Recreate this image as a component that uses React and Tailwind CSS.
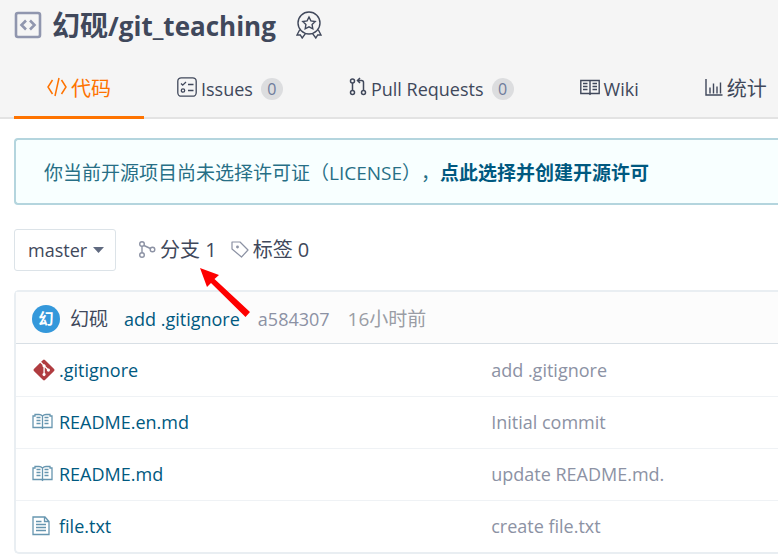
import React, { useState } from "react";
import { FaGitAlt } from "react-icons/fa";

const RepoIcon = () => (
  <svg className="size-7 shrink-0 text-[#9096ae]" viewBox="0 0 28 28" fill="none" stroke="currentColor">
    <rect x="2" y="2" width="24" height="24" rx="2" strokeWidth="2.6" />
    <path d="M12 9.500 7.500 14l4.500 4.500M16 9.500l4.500 4.500-4.500 4.500" strokeWidth="2.600" />
  </svg>
);

const BadgeIcon = () => (
  <svg className="h-7 w-[26px] shrink-0" viewBox="0 0 26 28" fill="none" stroke="currentColor" strokeWidth="1.400">
    <circle cx="13" cy="12" r="11" />
    <path d="m13 6 1.900 3.900 4.300.6-3.100 3 .7 4.300-3.800-2-3.800 2 .7-4.300-3.100-3 4.300-.6z" />
    <path d="M3.600 19 1 24l3.300-.1L6.200 27l3.600-4.900M22.400 19l2.600 5-3.300-.1L19.800 27l-3.600-4.900" />
  </svg>
);

const CodeIcon = () => (
  <svg className="h-5 w-5" viewBox="0 0 20 20" fill="none" stroke="currentColor" strokeWidth="1.500">
    <path d="M5.500 3 1 10l4.500 7M14.500 3 19 10l-4.500 7M12 1 8 19" />
  </svg>
);

const IssuesIcon = () => (
  <svg className="h-5 w-5" viewBox="0 0 20 20" fill="none" stroke="currentColor" strokeWidth="1.300">
    <rect x="0.800" y="0.800" width="18.400" height="18.400" rx="3.500" />
    <path d="m4 6.500 1.700 1.700L9 5M11 7.500h5.500M11 13.500h5.500" />
    <circle cx="6" cy="13.500" r="1.700" />
  </svg>
);

const PullIcon = () => (
  <svg className="h-5 w-[18px]" viewBox="0 0 18 20" fill="none" stroke="currentColor" strokeWidth="1.500">
    <circle cx="3.500" cy="4" r="2" />
    <circle cx="3.500" cy="15.500" r="2" />
    <circle cx="14.500" cy="15.500" r="2" />
    <path d="M3.500 6v7.500M14.500 13.500V5.500q0-2-2-2H9M11 1 8.500 3.500 11 6" />
  </svg>
);

const WikiIcon = () => (
  <svg className="h-5 w-5" viewBox="0 0 20 20" fill="none" stroke="currentColor" strokeWidth="1.400">
    <path d="M.8 3.500h18.400v13H11l-1 .8-1-.8H.8zM10 3.500v13" />
    <path d="M3 6.500h4.500M3 9.500h4.500M3 12.500h4.500M12.500 6.500H17M12.500 9.500H17M12.500 12.500H17" />
  </svg>
);

const StatsIcon = () => (
  <svg className="h-5 w-[18px]" viewBox="0 0 18 20" fill="none" stroke="currentColor" strokeWidth="1.400">
    <path d="M1 2v16h16.500M5 16.500v-6M8.500 16.500V6.500M12 16.500v-7M15.500 16.500V5.500" />
  </svg>
);

const BranchIcon = () => (
  <svg className="h-5 w-[18px] text-[#8c92a4]" viewBox="0 0 18 20" fill="none" stroke="currentColor" strokeWidth="1.400">
    <circle cx="4" cy="4" r="2.300" />
    <circle cx="4" cy="15" r="2.300" />
    <circle cx="14.500" cy="9.500" r="2.300" />
    <path d="M4 6.300v6.400M6 5.500l6.400 3" />
  </svg>
);

const TagIcon = () => (
  <svg className="h-5 w-[18px] text-[#8c92a4]" viewBox="0 0 18 20" fill="none" stroke="currentColor" strokeWidth="1.200">
    <path d="M1 2h8l8 8-6.500 7L1 9z" strokeLinejoin="round" />
    <circle cx="6.500" cy="7" r="0.800" fill="currentColor" />
  </svg>
);

const BookIcon = () => (
  <svg className="h-5 w-[21px]" viewBox="0 0 21 20" fill="none" stroke="currentColor" strokeWidth="1.300">
    <path d="M10.500 4Q9 2.500 7 2.500H3V4H1v11.500h8.500l1 .8 1-.8H20V4h-2V2.500h-4q-2 0-3.500 1.500zV16" />
    <path d="M4.500 5.500h4M4.500 8.500h4M4.500 11.500h4M12.500 5.500h4M12.500 8.500h4M12.500 11.500h4" />
  </svg>
);

const FileIcon = () => (
  <svg className="h-5 w-[18px]" viewBox="0 0 18 20" fill="none" stroke="currentColor" strokeWidth="1.300">
    <path d="M1 1h12l4 4.500V18.500H1zM12.500 1v4.500h4" />
    <path d="M4 5.500h5.500M4 8.500h10M4 11.500h10M4 14.500h10" />
  </svg>
);

const tabs = [
  { label: "代码", icon: <CodeIcon />, active: true, size: "text-xl" },
  { label: "Issues", icon: <IssuesIcon />, count: 0, size: "text-lg" },
  { label: "Pull Requests", icon: <PullIcon />, count: 0, size: "text-lg" },
  { label: "Wiki", icon: <WikiIcon />, size: "text-lg" },
  { label: "统计", icon: <StatsIcon />, size: "text-xl" },
];

const files = [
  { name: ".gitignore", message: "add .gitignore", icon: <FaGitAlt className="size-6 text-[#b03c40]" /> },
  { name: "README.en.md", message: "Initial commit", icon: <BookIcon /> },
  { name: "README.md", message: "update README.md.", icon: <BookIcon /> },
  { name: "file.txt", message: "create file.txt", icon: <FileIcon /> },
];

const App = () => {
  const [branch, setBranch] = useState("master");

  return (
    <div className="overflow-x-hidden bg-white font-['Open_Sans','Noto_Sans_CJK_SC',sans-serif] text-lg leading-7 text-[#40485b] [text-spacing-trim:space-all]">
      <header className="border-b-2 border-[#e3e3e3] bg-[#f5f5f5]">
        <div className="flex h-[58px] items-center px-[14px] pb-2">
          <RepoIcon />
          <h1 className="ml-2.5 text-[26px] leading-8 font-bold whitespace-nowrap">
            <span className="text-[28px]">幻砚</span>/git_teaching
          </h1>
          <button type="button" aria-label="推荐项目" className="ml-5">
            <BadgeIcon />
          </button>
        </div>
        <nav className="-mb-0.5 flex pl-[14px]">
          {tabs.map((tab) => (
            <a
              key={tab.label}
              href="#"
              className={`flex h-[61px] shrink-0 items-center gap-1 border-b-3 px-[33px] pt-1 whitespace-nowrap ${
                tab.active ? "border-[#fe7300] text-[#fe7300]" : "border-transparent"
              }`}
            >
              <span className="-mt-1">{tab.icon}</span>
              <span className={tab.size}>{tab.label}</span>
              {tab.count !== undefined && (
                <span className="ml-1 flex size-[22px] items-center justify-center rounded-full bg-[#dcdddf] text-base text-[#6e7b9b]">
                  {tab.count}
                </span>
              )}
            </a>
          ))}
        </nav>
      </header>

      <main className="pl-[14px]">
        <div className="mt-[19px] flex h-[67px] items-center rounded-l-[4px] border-2 border-r-0 border-[#b4d5de] bg-[#f8ffff] pt-0.5 pl-7 text-[19px] whitespace-nowrap text-[#276f86]">
          <p>
            你当前开源项目尚未选择许可证（LICENSE），
            <a href="#" className="font-bold text-[#005980]">点此选择并创建开源许可</a>
          </p>
        </div>

        <div className="mt-6 flex items-center whitespace-nowrap">
          <div className="relative flex items-center">
            <select
              aria-label="选择分支"
              value={branch}
              onChange={(e) => setBranch(e.target.value)}
              className="h-[42px] w-[102px] appearance-none rounded-[3px] border border-[#dce3e8] bg-white pl-[13px]"
            >
              <option value="master">master</option>
            </select>
            <svg className="pointer-events-none absolute right-3 h-[6px] w-[11px]" viewBox="0 0 11 6" fill="#606a80">
              <path d="M0 0h11L5.500 6z" />
            </svg>
          </div>
          <a href="#" className="relative ml-[22px] flex items-center gap-1">
            <BranchIcon />
            <span className="text-xl">分支 1</span>
            <svg className="pointer-events-none absolute top-8 left-[62px] h-[50px] w-[50px]" viewBox="0 0 50 50" fill="#fe0000">
              <path d="M0 0l19 7-4.500 4L50 44l-4.500 5-34.500-34-4 4z" />
            </svg>
          </a>
          <a href="#" className="ml-[14px] flex items-center gap-1">
            <TagIcon />
            <span className="text-xl">标签 0</span>
          </a>
        </div>

        <section className="mt-[19px] rounded-l-[5px] border-2 border-r-0 border-[#e9eef2]">
          <div className="flex h-[52px] items-center border-b border-[#d8dfe5] bg-[#fcfcfc] pt-0.5 pl-4 whitespace-nowrap">
            <span className="flex size-7 items-center justify-center rounded-full bg-[#3498db] text-[15px] leading-none font-bold text-white">
              幻
            </span>
            <a href="#" className="ml-2.5 text-[19px]">幻砚</a>
            <a href="#" className="ml-4 text-[#005980]">add .gitignore</a>
            <a href="#" className="ml-[18px] text-[#8c92a4]">a584307</a>
            <span className="ml-[18px] text-[19px] text-[#9a9da5]">16小时前</span>
          </div>
          <table className="w-full table-fixed border-collapse">
            <tbody>
              {files.map((file) => (
                <tr key={file.name} className="border-b border-[#eff2f5] last:border-b-0">
                  <td className="h-[52px] w-3/5 pl-4">
                    <a href="#" className="flex items-center text-[#005980]">
                      <span className="flex w-[27px] text-[#6796b0]">{file.icon}</span>
                      {file.name}
                    </a>
                  </td>
                  <td className="pl-[18px] text-[#8c92a4]">{file.message}</td>
                </tr>
              ))}
            </tbody>
          </table>
        </section>
      </main>
    </div>
  );
};

export default App;
